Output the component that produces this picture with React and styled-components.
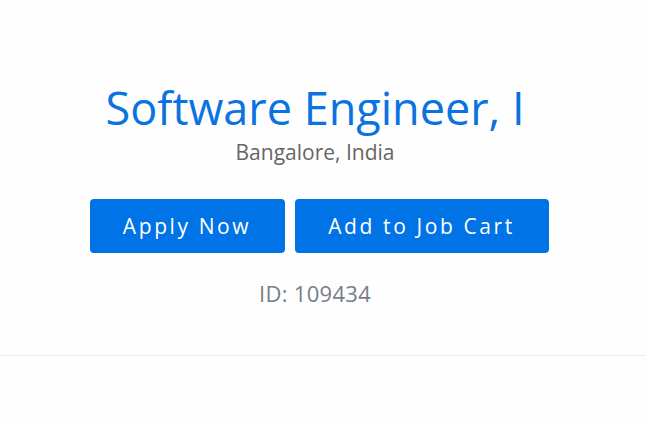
import React from 'react';
import styled, { createGlobalStyle } from 'styled-components';

const GlobalStyle = createGlobalStyle`
  body {
    margin: 0;
    background: #fefefe;
    font-family: "Open Sans", Lato, sans-serif;
  }
`

const Page = styled.div`
  width: 100%;
  min-height: 423px;
`

const Hero = styled.section`
  display: flex;
  flex-direction: column;
  align-items: center;
  padding: 81px 8px 0 0;
  height: 356px;
  border-bottom: 1px solid #ebebeb;
  box-sizing: border-box;
`

const Title = styled.h1`
  margin: 0 8px 0 0;
  font-size: 45px;
  font-weight: 400;
  line-height: 54px;
  color: #0a73e0;
`

const Location = styled.div`
  margin: 4px 8px 0 0;
  font-size: 21px;
  line-height: 26px;
  color: #666;
`

const Actions = styled.div`
  display: flex;
  gap: 10px;
  margin-top: 34px;
`

const Button = styled.button`
  height: 54px;
  width: ${p => p.w}px;
  border: none;
  border-radius: 4px;
  background: #0073e6;
  color: #fff;
  font-family: inherit;
  font-size: 21px;
  letter-spacing: 2.6px;
  cursor: pointer;
`

const JobId = styled.div`
  margin: 25px 8px 0 0;
  font-size: 22px;
  letter-spacing: 0.3px;
  color: #767e87;
`

export default function App() {
  return (
    <Page>
      <GlobalStyle />
      <Hero>
        <Title>Software Engineer, I</Title>
        <Location>Bangalore, India</Location>
        <Actions>
          <Button w={195}>Apply Now</Button>
          <Button w={254}>Add to Job Cart</Button>
        </Actions>
        <JobId>ID: 109434</JobId>
      </Hero>
    </Page>
  )
}
